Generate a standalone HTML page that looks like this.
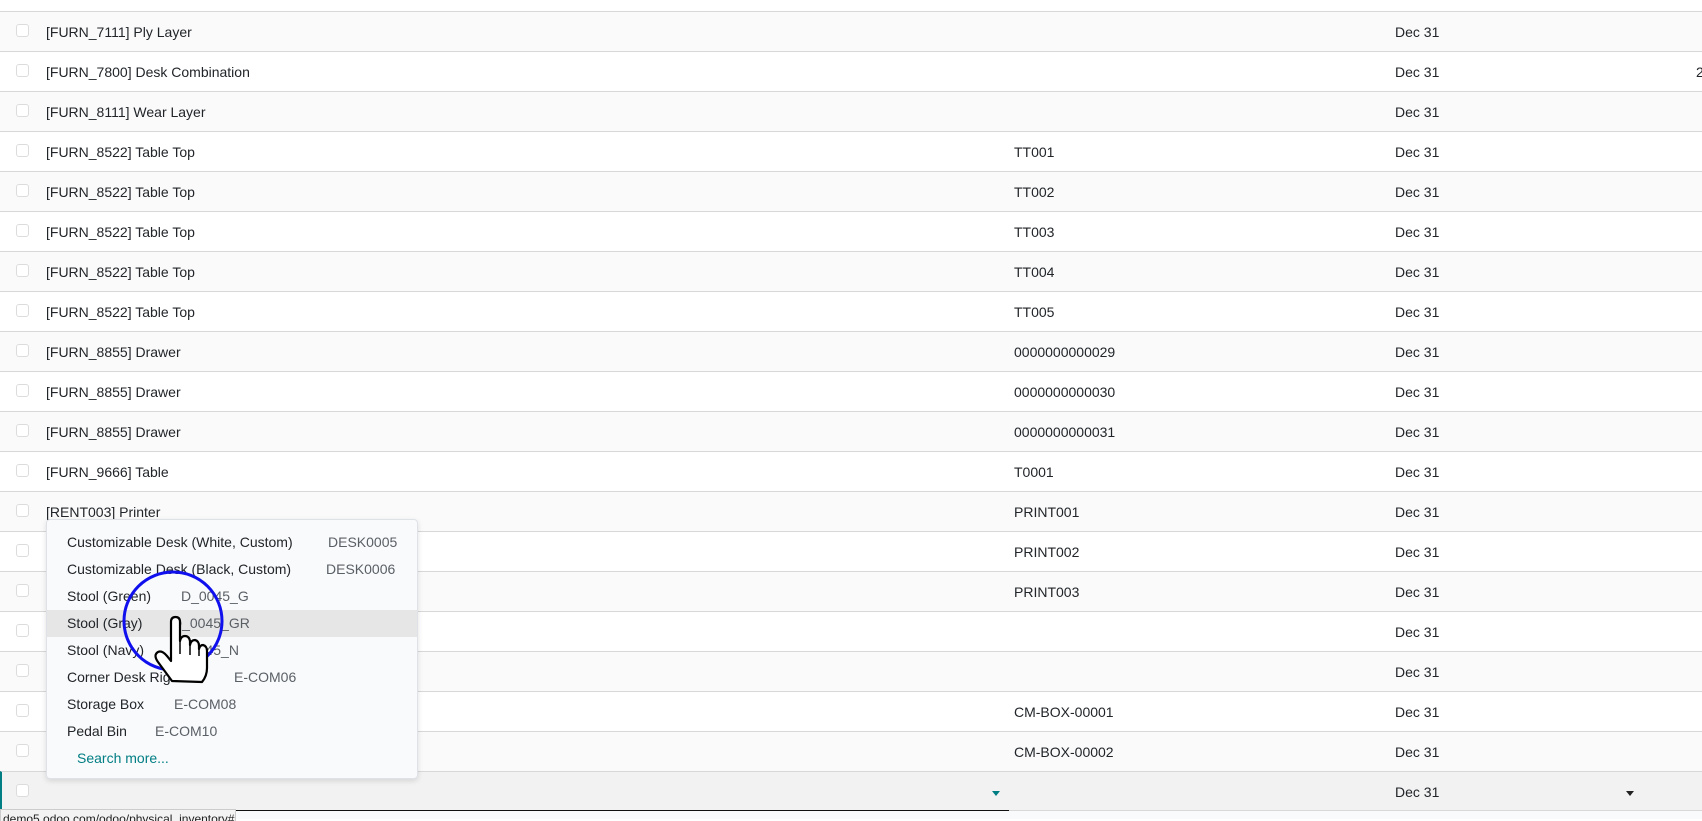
<!DOCTYPE html>
<html><head><meta charset="utf-8"><style>
*{margin:0;padding:0;box-sizing:border-box}
body{width:1702px;height:819px;overflow:hidden;background:#fff;font-family:"Liberation Sans",Arial,sans-serif;font-size:14px;color:#212529;position:relative}
.row{position:absolute;left:0;width:1702px;height:40px;border-top:1px solid #d8d8d8}
.row.a{background:#fafafa}
.row span{position:absolute;top:11px;line-height:18px;white-space:nowrap}
.cb{position:absolute;left:16px;top:12px;width:13px;height:13px;border:1px solid #dcdcdc;border-radius:3px;background:#fff}
.n{left:46px}.l{left:1014px}.d{left:1395px}
.dd{position:absolute;left:46px;top:519px;width:372px;height:260px;background:#f9fafb;border:1px solid #dee2e6;border-radius:4px;box-shadow:0 2px 6px rgba(0,0,0,.12)}
.it{position:absolute;left:0;width:370px;height:27px;line-height:27px}
.it b{font-weight:normal;position:absolute;left:20px}
.it i{font-style:normal;position:absolute;color:#5a5f66}
.hl{background:#e6e6e6}
</style></head><body>
<div class="row a" style="top:11px"><div class="cb"></div><span class="n">[FURN_7111] Ply Layer</span><span class="d">Dec 31</span></div>
<div class="row" style="top:51px"><div class="cb"></div><span class="n">[FURN_7800] Desk Combination</span><span class="d">Dec 31</span><span style="left:1696px">2</span></div>
<div class="row a" style="top:91px"><div class="cb"></div><span class="n">[FURN_8111] Wear Layer</span><span class="d">Dec 31</span></div>
<div class="row" style="top:131px"><div class="cb"></div><span class="n">[FURN_8522] Table Top</span><span class="l">TT001</span><span class="d">Dec 31</span></div>
<div class="row a" style="top:171px"><div class="cb"></div><span class="n">[FURN_8522] Table Top</span><span class="l">TT002</span><span class="d">Dec 31</span></div>
<div class="row" style="top:211px"><div class="cb"></div><span class="n">[FURN_8522] Table Top</span><span class="l">TT003</span><span class="d">Dec 31</span></div>
<div class="row a" style="top:251px"><div class="cb"></div><span class="n">[FURN_8522] Table Top</span><span class="l">TT004</span><span class="d">Dec 31</span></div>
<div class="row" style="top:291px"><div class="cb"></div><span class="n">[FURN_8522] Table Top</span><span class="l">TT005</span><span class="d">Dec 31</span></div>
<div class="row a" style="top:331px"><div class="cb"></div><span class="n">[FURN_8855] Drawer</span><span class="l">0000000000029</span><span class="d">Dec 31</span></div>
<div class="row" style="top:371px"><div class="cb"></div><span class="n">[FURN_8855] Drawer</span><span class="l">0000000000030</span><span class="d">Dec 31</span></div>
<div class="row a" style="top:411px"><div class="cb"></div><span class="n">[FURN_8855] Drawer</span><span class="l">0000000000031</span><span class="d">Dec 31</span></div>
<div class="row" style="top:451px"><div class="cb"></div><span class="n">[FURN_9666] Table</span><span class="l">T0001</span><span class="d">Dec 31</span></div>
<div class="row a" style="top:491px"><div class="cb"></div><span class="n">[RENT003] Printer</span><span class="l">PRINT001</span><span class="d">Dec 31</span></div>
<div class="row" style="top:531px"><div class="cb"></div><span class="l">PRINT002</span><span class="d">Dec 31</span></div>
<div class="row a" style="top:571px"><div class="cb"></div><span class="l">PRINT003</span><span class="d">Dec 31</span></div>
<div class="row" style="top:611px"><div class="cb"></div><span class="d">Dec 31</span></div>
<div class="row a" style="top:651px"><div class="cb"></div><span class="d">Dec 31</span></div>
<div class="row" style="top:691px"><div class="cb"></div><span class="l">CM-BOX-00001</span><span class="d">Dec 31</span></div>
<div class="row a" style="top:731px"><div class="cb"></div><span class="l">CM-BOX-00002</span><span class="d">Dec 31</span></div>
<div class="row" style="top:771px;background:#f2f2f2;border-left:2px solid #017e84;border-bottom:1px solid #d8d8d8"><div class="cb" style="left:14px"></div><span class="d" style="left:1393px">Dec 31</span>
<div style="position:absolute;left:990px;top:19px;border-left:4px solid transparent;border-right:4px solid transparent;border-top:5px solid #017e84"></div>
<div style="position:absolute;left:1624px;top:19px;border-left:4px solid transparent;border-right:4px solid transparent;border-top:5px solid #222"></div>
</div>
<div style="position:absolute;left:0;top:810px;width:1009px;height:1px;background:#111"></div>
<div style="position:absolute;left:0;top:811px;width:1702px;height:8px;background:#f9fafb"></div>
<div style="position:absolute;left:0;top:809px;width:236px;height:12px;background:#f3f3f3;border:1px solid #ccc;border-bottom:none;font-size:12px;line-height:14px;color:#222;overflow:hidden;padding:2px 0 0 2px;white-space:nowrap">demo5.odoo.com/odoo/physical_inventory#</div>
<div class="dd">
<div class="it" style="top:9px"><b>Customizable Desk (White, Custom)</b><i style="left:281px">DESK0005</i></div>
<div class="it" style="top:36px"><b>Customizable Desk (Black, Custom)</b><i style="left:279px">DESK0006</i></div>
<div class="it" style="top:63px"><b>Stool (Green)</b><i style="left:134px">D_0045_G</i></div>
<div class="it hl" style="top:90px"><b>Stool (Gray)</b><i style="left:125px">D_0045_GR</i></div>
<div class="it" style="top:117px"><b>Stool (Navy)</b><i style="left:125px">D_0045_N</i></div>
<div class="it" style="top:144px"><b>Corner Desk Right Sit</b><i style="left:187px">E-COM06</i></div>
<div class="it" style="top:171px"><b>Storage Box</b><i style="left:127px">E-COM08</i></div>
<div class="it" style="top:198px"><b>Pedal Bin</b><i style="left:108px">E-COM10</i></div>
<div class="it" style="top:225px"><b style="left:30px;color:#017e84">Search more...</b></div>
</div>
<svg style="position:absolute;left:0;top:0" width="1702" height="819">
<circle cx="173" cy="621" r="49" fill="none" stroke="#1010ee" stroke-width="3"/>
<path d="M172 681 L158 662 Q153 655 158 652 Q162 650 167 656 L171 661 L171 622 Q171 617 175.5 617 Q180 617 180 622 L180 641 Q181 636 185 636 Q189 636 190 641 L190 645 Q191 640 195 640 Q199 641 199 646 L199 649 Q200 645 203 645 Q207 646 207 651 L207 668 Q207 676 202 682 Z" fill="#fff" stroke="#000" stroke-width="2.2" stroke-linejoin="round"/>
<path d="M180 641 L180 654 M190 645 L190 655 M199 649 L199 656" stroke="#000" stroke-width="1.5"/>
</svg>
</body></html>
